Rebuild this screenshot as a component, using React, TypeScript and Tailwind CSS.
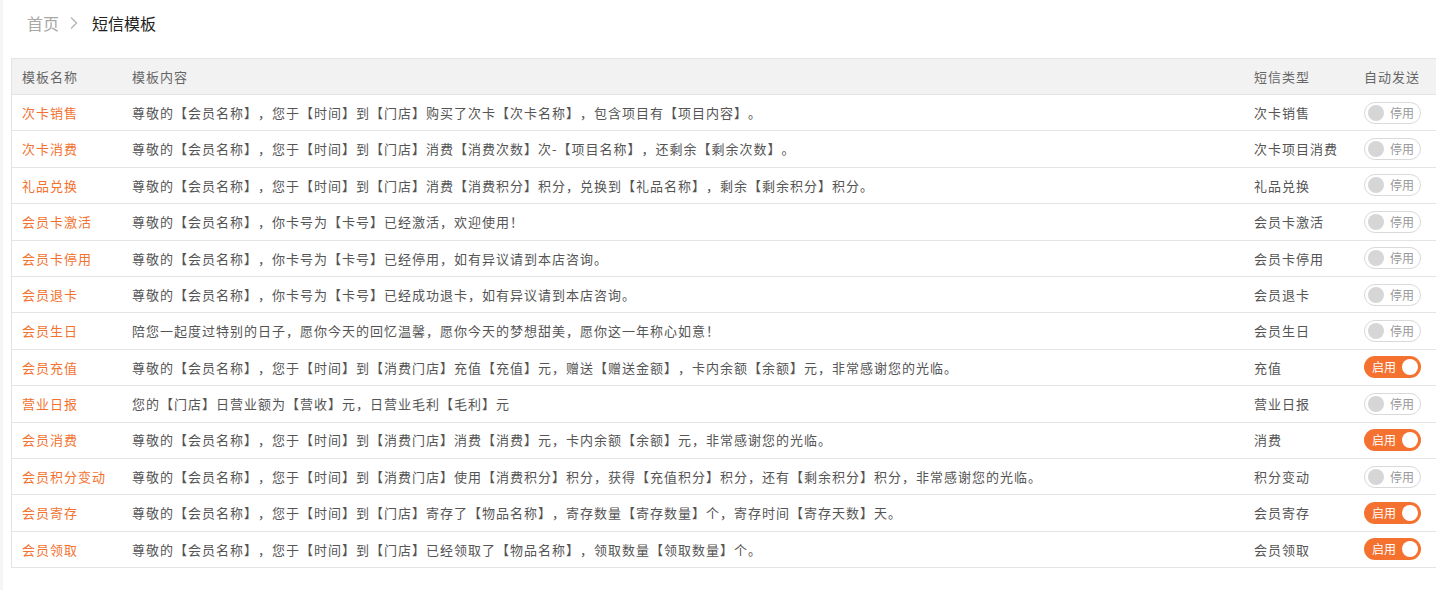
import React from "react"

type Row = { name: string; content: string; type: string; on: boolean }

const rows: Row[] = [
  { name: "次卡销售", content: "尊敬的【会员名称】，您于【时间】到【门店】购买了次卡【次卡名称】，包含项目有【项目内容】。", type: "次卡销售", on: false },
  { name: "次卡消费", content: "尊敬的【会员名称】，您于【时间】到【门店】消费【消费次数】次-【项目名称】，还剩余【剩余次数】。", type: "次卡项目消费", on: false },
  { name: "礼品兑换", content: "尊敬的【会员名称】，您于【时间】到【门店】消费【消费积分】积分，兑换到【礼品名称】，剩余【剩余积分】积分。", type: "礼品兑换", on: false },
  { name: "会员卡激活", content: "尊敬的【会员名称】，你卡号为【卡号】已经激活，欢迎使用！", type: "会员卡激活", on: false },
  { name: "会员卡停用", content: "尊敬的【会员名称】，你卡号为【卡号】已经停用，如有异议请到本店咨询。", type: "会员卡停用", on: false },
  { name: "会员退卡", content: "尊敬的【会员名称】，你卡号为【卡号】已经成功退卡，如有异议请到本店咨询。", type: "会员退卡", on: false },
  { name: "会员生日", content: "陪您一起度过特别的日子，愿你今天的回忆温馨，愿你今天的梦想甜美，愿你这一年称心如意！", type: "会员生日", on: false },
  { name: "会员充值", content: "尊敬的【会员名称】，您于【时间】到【消费门店】充值【充值】元，赠送【赠送金额】，卡内余额【余额】元，非常感谢您的光临。", type: "充值", on: true },
  { name: "营业日报", content: "您的【门店】日营业额为【营收】元，日营业毛利【毛利】元", type: "营业日报", on: false },
  { name: "会员消费", content: "尊敬的【会员名称】，您于【时间】到【消费门店】消费【消费】元，卡内余额【余额】元，非常感谢您的光临。", type: "消费", on: true },
  { name: "会员积分变动", content: "尊敬的【会员名称】，您于【时间】到【消费门店】使用【消费积分】积分，获得【充值积分】积分，还有【剩余积分】积分，非常感谢您的光临。", type: "积分变动", on: false },
  { name: "会员寄存", content: "尊敬的【会员名称】，您于【时间】到【门店】寄存了【物品名称】，寄存数量【寄存数量】个，寄存时间【寄存天数】天。", type: "会员寄存", on: true },
  { name: "会员领取", content: "尊敬的【会员名称】，您于【时间】到【门店】已经领取了【物品名称】，领取数量【领取数量】个。", type: "会员领取", on: true },
]

function Toggle({ on }: { on: boolean }) {
  if (on) {
    return (
      <div className="flex h-[22px] w-[57px] items-center justify-between rounded-full bg-[#f5712f] pl-[8px] pr-[3px] tracking-normal">
        <span className="text-[12px] leading-none text-white">启用</span>
        <span className="h-[16px] w-[16px] rounded-full bg-white" />
      </div>
    )
  }
  return (
    <div className="flex h-[22px] w-[57px] items-center justify-between rounded-full border border-[#d9d9d9] bg-white pl-[3px] pr-[6px] tracking-normal">
      <span className="h-[16px] w-[16px] rounded-full bg-[#d6d6d6]" />
      <span className="text-[12px] leading-none text-[#999]">停用</span>
    </div>
  )
}

export default function App() {
  return (
    <div
      className="min-h-[590px] bg-white text-[13px] tracking-[1px] text-[#555] [text-spacing-trim:space-all]"
      style={{ fontFamily: '"Microsoft YaHei", "Noto Sans CJK SC", "Noto Sans", sans-serif' }}
    >
      <div className="flex min-h-[590px]">
        <div className="w-[3px] shrink-0 bg-[#f4f5f6]" />
        <div className="flex-1">
          <div className="flex h-[46px] items-center pl-[24px] text-[16px] tracking-normal">
            <span className="text-[#a8a8a8]">首页</span>
            <svg className="ml-[10px] mr-[13px]" width="10" height="14" viewBox="0 0 10 14" fill="none">
              <path d="M2 1.5 L7.5 7 L2 12.5" stroke="#b5b5b5" strokeWidth="1.4" />
            </svg>
            <span className="text-[#222]">短信模板</span>
          </div>

          <div className="ml-[8px] mt-[12px] border-l border-t border-[#e4e4e4]">
            <div className="flex h-[36px] items-center border-b border-[#e4e4e4] bg-[#f2f2f2] text-[#666]">
              <div className="w-[110px] shrink-0 pl-[10px]">模板名称</div>
              <div className="flex-1 pl-[10px]">模板内容</div>
              <div className="w-[110px] shrink-0 pl-[10px]">短信类型</div>
              <div className="w-[82px] shrink-0 pl-[10px]">自动发送</div>
            </div>
            {rows.map((r) => (
              <div key={r.name} className="flex h-[36.4px] items-center border-b border-[#e4e4e4]">
                <div className="w-[110px] shrink-0 pl-[10px] text-[#f3722f]">{r.name}</div>
                <div className="flex-1 whitespace-nowrap pl-[10px]">{r.content}</div>
                <div className="w-[110px] shrink-0 pl-[10px]">{r.type}</div>
                <div className="w-[82px] shrink-0 pl-[10px]">
                  <Toggle on={r.on} />
                </div>
              </div>
            ))}
          </div>
        </div>
      </div>
    </div>
  )
}
